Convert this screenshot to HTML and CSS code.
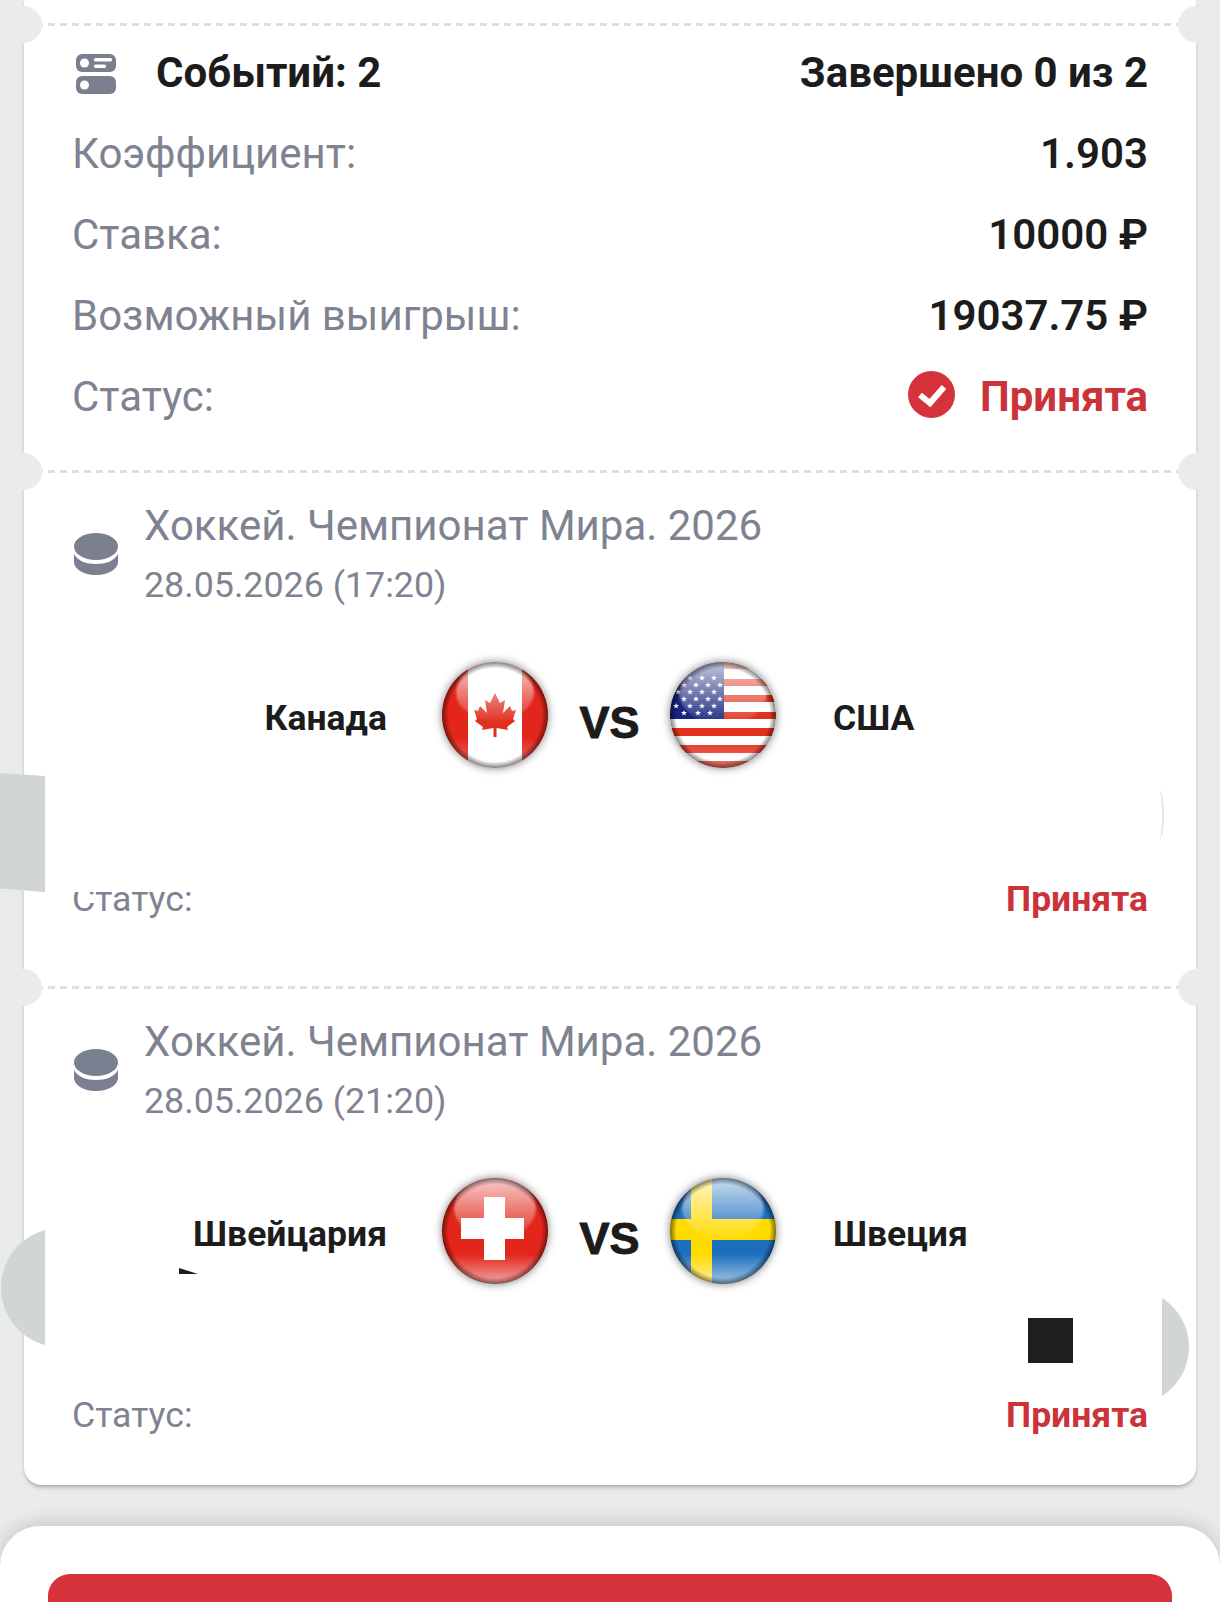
FILE: index.html
```html
<!DOCTYPE html>
<html lang="ru">
<head>
    <meta charset="UTF-8">
    <meta name="viewport" content="width=device-width, initial-scale=1.0">
    <title>Купон</title>
    <link rel="stylesheet" href="styles.css">
</head>
<body>
    <!--общие градиенты для флагов-->
    <svg class="defs" aria-hidden="true">
        <defs>
            <linearGradient id="gloss" x1="0" y1="0" x2="0" y2="1">
                <stop offset="0" stop-color="#fff" stop-opacity=".78"/>
                <stop offset="1" stop-color="#fff" stop-opacity=".04"/>
            </linearGradient>
            <linearGradient id="glow" x1="0" y1="0" x2="0" y2="1">
                <stop offset="0" stop-color="#fff" stop-opacity="0"/>
                <stop offset="1" stop-color="#fff" stop-opacity=".6"/>
            </linearGradient>
            <radialGradient id="edge">
                <stop offset=".88" stop-color="#000" stop-opacity="0"/>
                <stop offset="1" stop-color="#000" stop-opacity=".5"/>
            </radialGradient>
            <filter id="soft"><feGaussianBlur stdDeviation="1"/></filter>
            <clipPath id="round"><circle cx="53" cy="53" r="53"/></clipPath>
            <polygon id="star" points="0,-3 .8,-1 3,-1 1.2,.4 1.9,2.6 0,1.2 -1.9,2.6 -1.2,.4 -3,-1 -.8,-1"/>
        </defs>
    </svg>

    <div class="card">
        <div class="card-top"></div>
        <div class="tear"></div>
        <section class="summary">
            <div class="row head-row">
                <span class="events">
                    <svg class="icon-list" viewBox="0 0 40 40">
                        <rect width="40" height="18" rx="6" fill="#7b8091"/>
                        <rect y="22" width="40" height="18" rx="6" fill="#7b8091"/>
                        <circle cx="8.500" cy="9" r="4.500" fill="#fff"/>
                        <circle cx="8.500" cy="31" r="4.500" fill="#fff"/>
                        <rect x="18" y="4" width="18" height="3.500" rx="1.500" fill="#fff"/>
                        <rect x="18" y="10.500" width="12" height="3.500" rx="1.500" fill="#fff"/>
                    </svg>
                    Событий: 2
                </span>
                <span>Завершено 0 из 2</span>
            </div>
            <div class="row"><span class="label">Коэффициент:</span><span class="value">1.903</span></div>
            <div class="row"><span class="label">Ставка:</span><span class="value">10000 ₽</span></div>
            <div class="row"><span class="label">Возможный выигрыш:</span><span class="value">19037.75 ₽</span></div>
            <div class="row">
                <span class="label">Статус:</span>
                <span class="accepted">
                    <svg class="icon-check" viewBox="0 0 47 47">
                        <circle cx="23.500" cy="23.500" r="23.500" fill="#d6323c"/>
                        <path d="M12 24l10 8L36 16" fill="none" stroke="#fff" stroke-width="6"/>
                    </svg>
                    Принята
                </span>
            </div>
        </section>

        <div class="tear"></div>
        <section class="event">
            <div class="event-head">
                <svg class="icon-puck" viewBox="0 0 44 42">
                    <ellipse cx="22" cy="13.500" rx="22" ry="13.500" fill="#7b8091"/>
                    <path d="M0 21c4 7 12 10 22 10s18-3 22-10v8c0 7-10 13-22 13S0 36 0 29z" fill="#7b8091"/>
                </svg>
                <div>
                    <div class="event-title">Хоккей. Чемпионат Мира. 2026</div>
                    <div class="event-date">28.05.2026 (17:20)</div>
                </div>
            </div>
            <div class="match">
                <div class="team team-left">Канада</div>
                <svg class="flag" viewBox="0 0 106 106">
                    <g clip-path="url(#round)">
                        <rect width="106" height="106" fill="#e2261b"/>
                        <rect x="26" width="54" height="106" fill="#fff"/>
                        <polygon fill="#e0301f" points="53,31 58,41 63,38 61,51 68,44 70,49 74,48 71,57 73,59 65,65 66,68 54.500,66 54.500,75 51.500,75 51.500,66 40,68 41,65 33,59 35,57 32,48 36,49 38,44 45,51 43,38 48,41"/>
                        <ellipse cx="53" cy="30" rx="39" ry="29" fill="url(#gloss)" filter="url(#soft)"/>
                        <rect y="76" width="106" height="30" fill="url(#glow)" opacity=".6"/>
                        <circle cx="53" cy="53" r="53" fill="url(#edge)"/>
                    </g>
                </svg>
                <div class="vs">VS</div>
                <svg class="flag" viewBox="0 0 106 106">
                    <g clip-path="url(#round)">
                        <rect width="106" height="106" fill="#fff"/>
                        <g fill="#e2301f">
                            <rect y="0" width="106" height="7"/>
                            <rect y="17" width="106" height="7"/>
                            <rect y="33" width="106" height="7"/>
                            <rect y="50" width="106" height="7"/>
                            <rect y="66" width="106" height="8"/>
                            <rect y="83" width="106" height="8"/>
                            <rect y="99" width="106" height="7"/>
                        </g>
                        <rect width="54" height="57" fill="#17237c"/>
                        <g fill="#fff">
                            <use href="#star" x="20" y="16"/><use href="#star" x="32" y="16"/><use href="#star" x="44" y="16"/>
                            <use href="#star" x="14" y="23"/><use href="#star" x="26" y="23"/><use href="#star" x="38" y="23"/><use href="#star" x="50" y="23"/>
                            <use href="#star" x="8" y="30"/><use href="#star" x="20" y="30"/><use href="#star" x="32" y="30"/><use href="#star" x="44" y="30"/>
                            <use href="#star" x="14" y="37"/><use href="#star" x="26" y="37"/><use href="#star" x="38" y="37"/><use href="#star" x="50" y="37"/>
                            <use href="#star" x="6" y="44"/><use href="#star" x="20" y="44"/><use href="#star" x="32" y="44"/><use href="#star" x="44" y="44"/>
                            <use href="#star" x="14" y="51"/><use href="#star" x="28" y="51"/><use href="#star" x="40" y="51"/>
                        </g>
                        <ellipse cx="53" cy="30" rx="44" ry="33" fill="url(#gloss)" filter="url(#soft)"/>
                        <rect y="76" width="106" height="30" fill="url(#glow)" opacity=".6"/>
                        <circle cx="53" cy="53" r="53" fill="url(#edge)"/>
                    </g>
                </svg>
                <div class="team">США</div>
            </div>
            <div class="row status-row"><span class="label">Статус:</span><span class="accepted">Принята</span></div>
            <!--следы поверх купона-->
            <div class="smear-block"></div>
            <div class="smear-white"></div>
            <div class="smear-arc"></div>
        </section>

        <div class="tear"></div>
        <section class="event">
            <div class="event-head">
                <svg class="icon-puck" viewBox="0 0 44 42">
                    <ellipse cx="22" cy="13.500" rx="22" ry="13.500" fill="#7b8091"/>
                    <path d="M0 21c4 7 12 10 22 10s18-3 22-10v8c0 7-10 13-22 13S0 36 0 29z" fill="#7b8091"/>
                </svg>
                <div>
                    <div class="event-title">Хоккей. Чемпионат Мира. 2026</div>
                    <div class="event-date">28.05.2026 (21:20)</div>
                </div>
            </div>
            <div class="match">
                <div class="team team-left">Швейцария</div>
                <svg class="flag" viewBox="0 0 106 106">
                    <g clip-path="url(#round)">
                        <rect width="106" height="106" fill="#e2261b"/>
                        <ellipse cx="53" cy="30" rx="41" ry="31" fill="url(#gloss)" filter="url(#soft)"/>
                        <rect y="76" width="106" height="30" fill="url(#glow)"/>
                        <rect x="42" y="19" width="21" height="63" fill="#fff"/>
                        <rect x="19" y="40" width="63" height="21" fill="#fff"/>
                        <circle cx="53" cy="53" r="53" fill="url(#edge)"/>
                    </g>
                </svg>
                <div class="vs">VS</div>
                <svg class="flag" viewBox="0 0 106 106">
                    <g clip-path="url(#round)">
                        <rect width="106" height="106" fill="#1c6fbd"/>
                        <rect x="21" width="21" height="106" fill="#ffdb00"/>
                        <rect y="41" width="106" height="21" fill="#ffdb00"/>
                        <ellipse cx="53" cy="30" rx="41" ry="31" fill="url(#gloss)" filter="url(#soft)"/>
                        <rect y="76" width="106" height="30" fill="url(#glow)"/>
                        <circle cx="53" cy="53" r="53" fill="url(#edge)"/>
                    </g>
                </svg>
                <div class="team">Швеция</div>
            </div>
            <div class="row status-row"><span class="label">Статус:</span><span class="accepted">Принята</span></div>
            <!--следы поверх купона-->
            <div class="smear-left"></div>
            <div class="smear-right"></div>
            <div class="smear-square"></div>
            <div class="smear-tick"></div>
        </section>
    </div>

    <div class="panel">
        <div class="panel-btn"></div>
    </div>
</body>
</html>
```
FILE: styles.css
```css
*{
    margin:0;padding:0;
    box-sizing:border-box;
}
html,body{
    height:1602px;
    overflow:hidden;
}
body{
    background-color:#e9ebed;
    font-family:Roboto,"Noto Sans",sans-serif;
    color:#1c1c1c;
}
.defs{
    position:absolute;
    width:0;
    height:0;
}
.card{
    width:1172px;
    margin-left:24px;
    background-color:#fff;
    border-radius:0 0 18px 18px;
    box-shadow:0 3px 4px -1px rgba(0,0,0,.3);
}
.card-top{
    height:23px;
}
/*пунктир с вырезами по краям*/
.tear{
    height:3px;
    position:relative;
    background-image:repeating-linear-gradient(90deg,#dcdee1 0,#dcdee1 7px,transparent 7px,transparent 12px);
}
.tear::before,.tear::after{
    content:"";
    position:absolute;
    top:-17px;
    width:37px;
    height:37px;
    border-radius:50%;
    background-color:#e9ebed;
}
.tear::before{
    left:-19px;
}
.tear::after{
    right:-19px;
}
.summary{
    padding:6px 48px 33px;
}
.row{
    display:flex;
    justify-content:space-between;
    align-items:center;
    height:81px;
    font-size:42px;
}
.head-row{
    font-weight:700;
}
.events{
    display:flex;
    align-items:center;
}
.icon-list{
    width:40px;
    height:40px;
    margin:2px 40px 0 4px;
}
.label{
    font-size:42px;
    color:#7f8391;
}
.value{
    font-weight:600;
}
.accepted{
    display:flex;
    align-items:center;
    font-weight:700;
    color:#cb333b;
}
.icon-check{
    width:47px;
    height:47px;
    margin:-4px 25px 0 0;
}
.event{
    position:relative;
    padding:24px 48px 62px;
}
.event:last-child{
    padding-bottom:45px;
}
.event-head{
    display:flex;
    align-items:center;
}
.icon-puck{
    width:44px;
    height:42px;
    margin:0 26px 0 2px;
}
.event-title{
    font-size:42px;
    line-height:58px;
    color:#7f8391;
}
.event-date{
    font-size:35.800px;
    line-height:50px;
    margin-top:5px;
    color:#7f8391;
}
.match{
    display:flex;
    align-items:center;
    margin-top:52px;
}
.team{
    flex:1;
    font-size:35.500px;
    font-weight:700;
    padding:6px 0 0 57px;
}
.team-left{
    padding:6px 55px 0 0;
    text-align:right;
}
.flag{
    width:106px;
    height:106px;
    overflow:visible;
    filter:blur(.4px) drop-shadow(0 0 4px rgba(0,0,0,.5));
}
.vs{
    width:122px;
    padding:16px 0 0 1px;
    text-align:center;
    font-family:"Liberation Sans",sans-serif;
    font-size:45px;
    font-weight:700;
    line-height:50px;
    -webkit-text-stroke:1px #1c1c1c;
}
.status-row{
    height:50px;
    margin-top:106px;
    font-size:35.500px;
}
.status-row .label{
    font-size:35.700px;
}
.smear-block,.smear-white,.smear-arc,.smear-left,.smear-right,.smear-square,.smear-tick{
    position:absolute;
}
.smear-block{
    left:-24px;
    top:300px;
    width:45px;
    height:119px;
    background-color:#d1d5d6;
    clip-path:polygon(0 0,100% 3px,100% 100%,0 97%);
}
.smear-white{
    left:21px;
    top:320px;
    width:180px;
    height:99px;
    background-color:#fff;
}
.smear-arc{
    left:1130px;
    top:317px;
    width:10px;
    height:50px;
    border-right:2px solid #e3e5e6;
    border-radius:0 50% 50% 0;
}
.smear-left{
    left:-23px;
    top:241px;
    width:44px;
    height:115px;
    background-color:#d1d5d6;
    clip-path:circle(59.600px at 59.600px 57.500px);
}
.smear-right{
    left:1138px;
    top:309px;
    width:27px;
    height:98px;
    background-color:#d1d5d6;
    clip-path:circle(58px at -31px 49px);
}
.smear-square{
    left:1004px;
    top:329px;
    width:45px;
    height:45px;
    background-color:#1f1e1c;
}
.smear-tick{
    left:155px;
    top:279px;
    width:19px;
    height:6px;
    background-color:#1c1c1c;
    clip-path:polygon(0 0,100% 100%,0 100%);
}
.panel{
    height:76px;
    margin-top:41px;
    padding:48px 48px 0;
    background-color:#fff;
    border-radius:40px 40px 0 0;
    box-shadow:0 -4px 18px rgba(0,0,0,.15);
    overflow:hidden;
}
.panel-btn{
    height:60px;
    background-color:#d6323b;
    border-radius:22px 22px 0 0;
}
```
